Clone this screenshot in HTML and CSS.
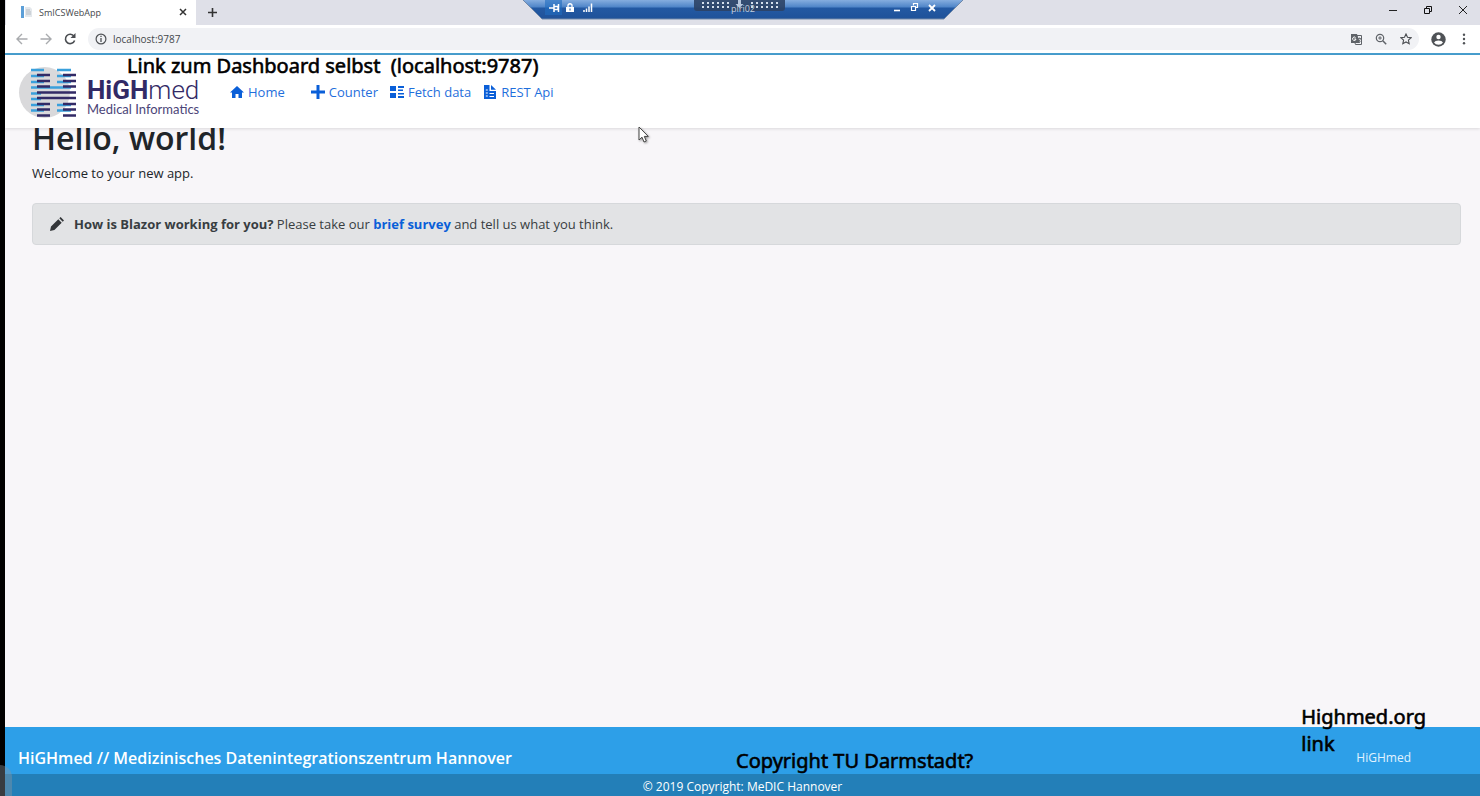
FILE: index.html
```html
<!DOCTYPE html>
<html lang="de">
<head>
<meta charset="utf-8">
<title>SmICSWebApp</title>
<link rel="stylesheet" href="styles.css">
</head>
<body>
<div class="window">
  <div class="tabstrip">
    <div class="tab">
      <svg class="tab-icon" viewBox="0 0 12 12"><path d="M0 0h3v12H0z" fill="#5c9fd8"/><path d="M4 1h5l2 2v8H4z" fill="#e4e8ec"/><path d="M5 4h4M5 6h5M5 8h5" stroke="#b5bcc4"/></svg>
      <span class="tab-title">SmICSWebApp</span>
      <button class="icon-button" aria-label="Close tab"><svg width="8" height="8" viewBox="0 0 8 8"><path d="M1 1l6 6M7 1L1 7" stroke="#333" stroke-width="1.5"/></svg></button>
    </div>
    <button class="icon-button new-tab" aria-label="New tab"><svg width="11" height="11" viewBox="0 0 11 11"><path d="M5.500 1v9M1 5.500h9" stroke="#333" stroke-width="1.600"/></svg></button>
    <div class="window-controls">
      <button class="icon-button" aria-label="Minimize"><svg width="10" height="10" viewBox="0 0 10 10"><path d="M1 5.500h8" stroke="#222"/></svg></button>
      <button class="icon-button" aria-label="Restore"><svg width="10" height="10" viewBox="0 0 10 10"><path d="M1.500 3.500h5v5h-5zM3.500 3V1.500h5v5H7" fill="none" stroke="#111"/></svg></button>
      <button class="icon-button" aria-label="Close"><svg width="10" height="10" viewBox="0 0 10 10"><path d="M1 1l8 8M9 1L1 9" stroke="#222"/></svg></button>
    </div>
  </div>
  <div class="toolbar">
    <button class="icon-button" aria-label="Back"><svg width="12" height="12" viewBox="0 0 12 12"><path d="M11.500 6H1.500M6 1L1 6l5 5" fill="none" stroke="#a9abae" stroke-width="1.400"/></svg></button>
    <button class="icon-button" aria-label="Forward"><svg width="12" height="12" viewBox="0 0 12 12"><path d="M.5 6h10M6 1l5 5-5 5" fill="none" stroke="#a9abae" stroke-width="1.400"/></svg></button>
    <button class="icon-button" aria-label="Reload"><svg width="12" height="12" viewBox="0 0 12 12"><path d="M10 3.200A4.700 4.700 0 1 0 10.600 7.500" fill="none" stroke="#4a4d51" stroke-width="1.600"/><path d="M11.500 0v5h-5z" fill="#4a4d51"/></svg></button>
    <div class="omnibox">
      <svg width="12" height="12" viewBox="0 0 12 12"><circle cx="6" cy="6" r="4.900" fill="none" stroke="#4f5256" stroke-width="1.200"/><path d="M6 5v4M6 2.800v1.300" stroke="#4f5256" stroke-width="1.300"/></svg>
      <input class="address" type="text" value="localhost:9787" aria-label="Address">
      <button class="icon-button" aria-label="Translate"><svg width="12" height="12" viewBox="0 0 12 12"><path d="M1 1h6l3 9H1z" fill="#5f6368"/><path d="M7 2.500h4.500v9H5.500L5 10" fill="none" stroke="#5f6368"/><path d="M5.500 4.500A1.700 1.700 0 1 0 6 6H4.300" fill="none" stroke="#fff"/><path d="M8 5.500h3M9.500 4.500v1M10.500 5.500Q10 8 8.500 8.500M8.500 6.500l2 2.500" fill="none" stroke="#5f6368" stroke-width=".8"/></svg></button>
      <button class="icon-button" aria-label="Zoom"><svg width="12" height="12" viewBox="0 0 12 12"><circle cx="5" cy="5" r="3.700" fill="none" stroke="#5f6368" stroke-width="1.200"/><path d="M7.800 7.800l3.400 3.400" stroke="#5f6368" stroke-width="1.500"/><path d="M3.200 5h3.600M5 3.200v3.600" stroke="#5f6368"/></svg></button>
      <button class="icon-button" aria-label="Bookmark"><svg width="12" height="12" viewBox="0 0 12 12"><path d="M6 1l1.500 3.300 3.600.4-2.700 2.400.8 3.600L6 8.900l-3.200 1.800.8-3.600L.9 4.700l3.600-.4z" fill="none" stroke="#4a4d51" stroke-width="1.100"/></svg></button>
    </div>
    <button class="icon-button profile" aria-label="Profile"><svg width="15" height="15" viewBox="0 0 15 15"><circle cx="7.500" cy="7.500" r="7.200" fill="#4f5256"/><circle cx="7.500" cy="5" r="2.200" fill="#fff"/><path d="M3 10.600Q4 8.600 7.500 8.600T12 10.600Q10.500 12.800 7.500 12.800T3 10.600z" fill="#fff"/></svg></button>
    <button class="icon-button" aria-label="Menu"><svg width="12" height="12" viewBox="0 0 12 12" fill="#4f5256"><circle cx="6" cy="1.800" r="1.200"/><circle cx="6" cy="6" r="1.200"/><circle cx="6" cy="10.200" r="1.200"/></svg></button>
  </div>

  <header class="site-header">
    <a class="brand" href="#">
      <svg class="brand-mark" viewBox="0 0 62 58">
        <circle cx="28.500" cy="29.500" r="25.500" fill="#d9d9db"/>
        <path d="M15 7h13M15 13h13M15 19h13M15 24.500h40M15 30.500h10M15 36h10M15 42h13M15 47.500h13M41 7h14M41 13h14M41 19h14M41 42h14M41 47.500h14" stroke="#3aa0dc" stroke-width="2.600"/>
        <path d="M21 12h13M21 18h13M21 23.500h13M21 29.500h39M21 35h39M21 41h13M21 46.500h13M21 52.500h13M47 12h13M47 18h13M47 23.500h13M47 41h13M47 46.500h13M47 52.500h13" stroke="#322a66" stroke-width="2.600"/>
      </svg>
      <span class="brand-text">
        <span class="brand-name"><b>HiGH</b>med</span>
        <span class="brand-sub">Medical Informatics</span>
      </span>
    </a>
    <nav class="nav">
      <a class="nav-link nav-home" href="#"><svg width="14" height="14" viewBox="0 0 14 14" fill="#0a5fd8"><path d="M7 1l7 6.500h-2V13H8.500V9h-3v4H2V7.500H0z"/></svg>Home</a>
      <a class="nav-link" href="#"><svg width="14" height="14" viewBox="0 0 14 14" fill="#0a5fd8"><path d="M5.500 0h3v5.500H14v3H8.500V14h-3V8.500H0v-3h5.500z"/></svg>Counter</a>
      <a class="nav-link" href="#"><svg width="14" height="14" viewBox="0 0 14 14" fill="#0a5fd8"><path d="M0 1h6v5H0zM0 8h6v5H0zM8 1h6v2H8zM8 4.500h5V6H8zM8 8h6v1.500H8zM8 11h6v2H8z"/></svg>Fetch data</a>
      <a class="nav-link" href="#"><svg width="14" height="14" viewBox="0 0 14 14"><path d="M1 0h5.500v6H13v8H1zM8 0l5 4.700H8z" fill="#0a5fd8"/><path d="M2.800 5h2M2.800 8h2M6.500 8.500H11M2.800 11h2M6.500 11.500H11" stroke="#fff" stroke-width="1.200"/></svg>REST Api</a>
    </nav>
  </header>

  <main class="content">
    <h1 class="title">Hello, world!</h1>
    <p class="welcome">Welcome to your new app.</p>
    <div class="alert" role="alert">
      <svg width="14" height="14" viewBox="0 0 14 14" fill="#333639"><path d="M0 14l1-4.500 7.300-7.200 3.400 3.400L4.400 13zM9.300 1.300L10.600 0 14 3.400l-1.300 1.300z"/></svg>
      <p class="alert-text"><strong>How is Blazor working for you?</strong> Please take our <a class="survey" href="#">brief survey</a> and tell us what you think.</p>
    </div>
  </main>

  <footer class="footer">
    <div class="footer-main">
      <strong class="footer-title">HiGHmed // Medizinisches Datenintegrationszentrum Hannover</strong>
      <a class="footer-link" href="#">HiGHmed</a>
    </div>
    <div class="copyright">© 2019 Copyright: MeDIC Hannover</div>
  </footer>
</div>

<div class="remote-bar">
  <svg class="remote-shape" viewBox="0 0 442 20">
    <defs><linearGradient id="bar" x1="0" y1="0" x2="0" y2="1"><stop offset="0" stop-color="#8db3e2"/><stop offset=".4" stop-color="#4f85c8"/><stop offset=".45" stop-color="#2359a3"/><stop offset="1" stop-color="#1f5299"/></linearGradient></defs>
    <path d="M0 -1L20 19H422L442 -1z" fill="url(#bar)" stroke="#7088a8"/>
    <path d="M23 0h17v15H23z" fill="#1f6cc0" opacity=".6"/>
    <path d="M27 8h5M32 4v8M32 6.500h4v3h-4M36.500 4v8" fill="none" stroke="#fff" stroke-width="1.500"/>
    <path d="M44 7h8v5h-8z" fill="#fff"/><path d="M46 7V5q2-2.500 4 0v2" fill="none" stroke="#fff" stroke-width="1.300"/><path d="M48 8.500v2" stroke="#1f5299"/>
    <path d="M62 12v-2M64.500 12V8.500M67 12V6.500M69.500 12V3.500" stroke="#fff" stroke-width="1.500"/>
    <path d="M372 10.500h6" stroke="#fff" stroke-width="1.600"/>
    <path d="M389.500 6.500h4v4h-4zM391.500 5.500v-2h4v4h-1.500" fill="none" stroke="#fff" stroke-width="1.200"/>
    <path d="M407 5l6 6M413 5l-6 6" stroke="#fff" stroke-width="1.800"/>
  </svg>
  <svg class="remote-grip" viewBox="0 0 91 12">
    <path d="M0 0h91v8q0 3-3 3H3q-3 0-3-3z" fill="#2c4265" opacity=".9"/>
    <path d="M8 3h27M8 7h27M57 3h27M57 7h27" stroke="#d4deeb" stroke-width="2" stroke-dasharray="2 3"/>
    <path d="M44 0h3v4h2.500l-4 4-4-4H44z" fill="#b6c6dc"/>
  </svg>
  <span class="remote-name">plri02</span>
</div>
<div class="note note-dashboard">Link zum Dashboard selbst&nbsp; (localhost:9787)</div>
<div class="note note-copyright">Copyright TU Darmstadt?</div>
<div class="note note-link">Highmed.org<br>link</div>
<div class="side-handle"></div>
<svg class="pointer" viewBox="0 0 12 18"><path d="M1 1v13l3-2.800 2 4.800 2.300-1-2-4.600h4z" fill="#fff" stroke="#444"/></svg>
</body>
</html>
```
FILE: styles.css
```css
* { box-sizing: border-box; }

body {
  margin: 0;
  background: #000;
  font-family: "Open Sans", "Noto Sans", sans-serif;
  font-size: 13px;
  color: #212529;
  overflow: hidden;
}

a { text-decoration: none; }

svg { display: block; flex: none; }

.window {
  display: flex;
  flex-direction: column;
  min-height: 100vh;
  margin-left: 5px;
  background: #f8f6f9;
}

.icon-button {
  display: flex;
  padding: 0;
  border: 0;
  background: none;
}

.tabstrip {
  display: flex;
  align-items: center;
  height: 25px;
  background: #dfe0e8;
}

.tab {
  display: flex;
  align-items: center;
  align-self: stretch;
  gap: 6px;
  width: 190px;
  margin-left: 1px;
  padding: 0 9px 1px 15px;
  background: #fff;
}

.tab-icon { width: 12px; height: 12px; }

.tab-title {
  flex: 1;
  font-size: 9px;
  color: #45484c;
}

.new-tab { margin-left: 11px; }

.window-controls {
  display: flex;
  gap: 25px;
  margin-left: auto;
  padding: 0 12px 5px 0;
}

.toolbar {
  display: flex;
  align-items: center;
  gap: 12px;
  height: 30px;
  padding: 0 10px 0 11px;
  border-bottom: 2px solid #489fcf;
  background: #fff;
}

.omnibox {
  display: flex;
  flex: 1;
  align-items: center;
  gap: 13px;
  height: 22px;
  padding: 0 7px;
  border-radius: 11px;
  background: #f1f2f5;
}

.address {
  flex: 1;
  min-width: 0;
  margin-left: -7px;
  padding: 0;
  border: 0;
  outline: 0;
  background: none;
  font: 10px "Open Sans", "Noto Sans", sans-serif;
  color: #45484c;
}

.site-header {
  position: relative;
  z-index: 1;
  display: flex;
  align-items: center;
  height: 73px;
  padding-left: 11px;
  background: #fff;
  box-shadow: 0 1px 3px rgba(0, 0, 0, 0.12);
}

.brand {
  display: flex;
  align-items: center;
  gap: 9px;
  width: 214px;
  color: #322a66;
}

.brand-mark { width: 62px; height: 58px; }

.brand-text {
  display: flex;
  flex-direction: column;
  padding-top: 12px;
  white-space: nowrap;
}

.brand-name {
  font: 300 26px/22px Roboto, sans-serif;
}

.brand-name b { font-weight: 700; }

.brand-sub {
  font: 13px/16px Lato, sans-serif;
  color: #4b4578;
}

.nav {
  display: flex;
  gap: 12px;
}

.nav-link {
  display: flex;
  align-items: center;
  gap: 4px;
  color: #1f6fdc;
}

.nav-home { margin-right: 14px; }

.content {
  flex: 1;
  padding: 0 19px 0 27px;
}

.title {
  margin: -8px 0 7px;
  font-size: 32px;
  line-height: 36px;
  font-weight: 600;
}

.welcome {
  margin: 0 0 20px;
  line-height: 20px;
}

.alert {
  display: flex;
  align-items: center;
  gap: 10px;
  height: 42px;
  padding: 0 17px;
  border: 1px solid #d6d8db;
  border-radius: 4px;
  background: #e2e3e5;
  color: #383d41;
}

.alert-text { margin: 0; }

.survey {
  font-weight: 700;
  color: #0a5fd8;
}

.footer { color: #fff; }

.footer-main {
  display: flex;
  align-items: center;
  justify-content: space-between;
  height: 47px;
  padding: 14px 69px 0 13px;
  background: #2d9fe8;
}

.footer-title {
  font-size: 16px;
  font-weight: 600;
}

.footer-link {
  font-size: 12px;
  color: #e2f3ff;
}

.copyright {
  height: 22px;
  padding-top: 2px;
  background: #237fb8;
  font-size: 12px;
  line-height: 22px;
  text-align: center;
}

.remote-bar {
  position: absolute;
  top: 0;
  left: 50%;
  width: 442px;
  height: 20px;
  margin-left: -218px;
}

.remote-shape { width: 442px; height: 20px; }

.remote-name {
  position: absolute;
  top: 3px;
  left: 0;
  width: 100%;
  font-size: 9px;
  line-height: 12px;
  text-align: center;
  color: #c3cfde;
}

.remote-grip {
  position: absolute;
  top: 0;
  left: 172px;
  width: 91px;
  height: 12px;
}

.note {
  position: absolute;
  z-index: 2;
  font-family: "Noto Sans", sans-serif;
  font-size: 20px;
  line-height: 27px;
  color: #000;
  white-space: nowrap;
  -webkit-text-stroke: 0.6px #000;
}

.note-dashboard { top: 52px; left: 127px; }

.note-copyright { bottom: 22px; left: 50%; margin-left: -4px; }

.note-link { right: 54px; bottom: 39px; }

.side-handle {
  position: absolute;
  bottom: 0;
  left: 0;
  width: 12px;
  height: 31px;
  border-radius: 0 12px 0 0;
  background: rgba(140, 150, 160, 0.4);
}

.pointer {
  position: absolute;
  z-index: 2;
  top: 126px;
  left: 638px;
  width: 12px;
  height: 18px;
  filter: drop-shadow(1px 1px 1px rgba(0, 0, 0, 0.4));
}
```
